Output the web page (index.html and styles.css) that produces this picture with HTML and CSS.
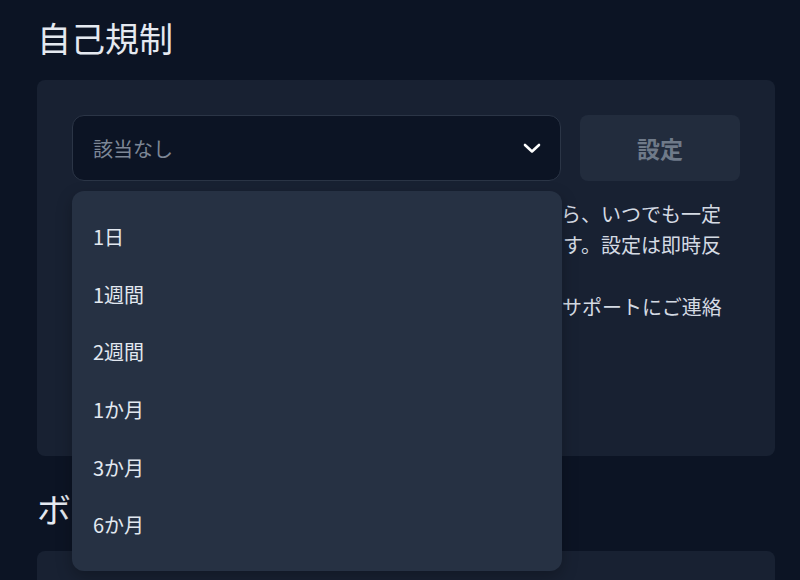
FILE: index.html
```html
<!DOCTYPE html>
<html lang="ja">
<head>
<meta charset="utf-8">
<title>自己規制</title>
<link rel="stylesheet" href="styles.css">
</head>
<body>
<div class="page">
  <h2 class="section-title">自己規制</h2>
  <div class="card">
    <div class="row">
      <div class="select-wrap">
        <div class="select">
          <span class="placeholder">該当なし</span>
          <svg class="chevron" width="18" height="12" viewBox="0 0 18 12"><path d="M2 3 L9 9.5 L16 3" fill="none" stroke="#ffffff" stroke-width="2.6" stroke-linecap="round" stroke-linejoin="round"/></svg>
        </div>
        <ul class="menu">
          <li class="menu-item">1日</li>
          <li class="menu-item">1週間</li>
          <li class="menu-item">2週間</li>
          <li class="menu-item">1か月</li>
          <li class="menu-item">3か月</li>
          <li class="menu-item">6か月</li>
        </ul>
      </div>
      <button class="btn" type="button">設定</button>
    </div>
    <div class="desc">
      <p>ゲームから丸1日でも離れて、休憩を取りたいと感じたら、いつでも一定<br>期間（最短で1日）アカウントを制限することができます。設定は即時反<br>映されます。</p>
      <p>途中解除はできません。詳細は週7日対応のカスタマーサポートにご連絡<br>ください。</p>
      <p class="note">※ 期間の短縮や取り消しはできません。</p>
    </div>
  </div>
  <h2 class="section-title">ボーナス制限</h2>
  <div class="card card-next"></div>
</div>
</body>
</html>
```

FILE: styles.css
```css
html, body {
  margin: 0;
  padding: 0;
  height: 100%;
  overflow: hidden;
  background: #0c1424;
}

body {
  font-family: "Noto Sans CJK JP", "Noto Sans", sans-serif;
  color: #e2e8f0;
}

.page {
  padding: 14px 25px 0 37px;
}

.section-title {
  margin: 0 0 18px 0;
  font-size: 34px;
  line-height: 48px;
  font-weight: 400;
  color: #e5e9f0;
}

.card {
  background: #182132;
  border-radius: 8px;
  padding: 35px 35px 52px 35px;
  margin-bottom: 29px;
}

.card-next {
  height: 200px;
}

.row {
  display: flex;
  gap: 19px;
}

.select-wrap {
  position: relative;
  flex: 0 0 489px;
}

.select {
  box-sizing: border-box;
  height: 66px;
  background: #0c1424;
  border: 1px solid #2b3546;
  border-radius: 12px;
  display: flex;
  align-items: center;
  justify-content: space-between;
  padding: 0 19px 0 20px;
}

.placeholder {
  font-size: 20px;
  color: #7d8796;
}

.chevron {
  display: block;
}

.menu {
  position: absolute;
  top: 76px;
  left: 0;
  right: -1px;
  margin: 0;
  padding: 17px 0;
  list-style: none;
  background: #263143;
  border-radius: 12px;
  box-shadow: 0 6px 16px rgba(0, 0, 0, 0.25);
  z-index: 10;
}

.menu-item {
  height: 57.6px;
  display: flex;
  align-items: center;
  padding: 0 21px;
  font-size: 20px;
  color: #e2e8f0;
}

.btn {
  flex: 0 0 160px;
  height: 66px;
  border: none;
  border-radius: 8px;
  background: #222c3d;
  color: #6f7a89;
  font-family: "Noto Sans CJK JP", "Noto Sans", sans-serif;
  font-size: 23px;
  font-weight: 700;
}

.desc {
  margin-top: 17px;
  font-size: 20px;
  line-height: 31px;
  color: #d4dae3;
}

.desc p {
  margin: 0;
}

.desc .note {
  margin-top: 20px;
}
```
